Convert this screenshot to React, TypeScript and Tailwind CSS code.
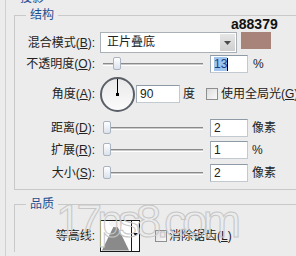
import React from 'react';

function Label({ children }: { children: React.ReactNode }) {
  return <span className="w-[80px] shrink-0 text-right text-[12px] leading-[16px] text-[#222]">{children}</span>;
}

function Slider({ thumb }: { thumb: number }) {
  return (
    <div className="relative ml-[8px] h-[14px] w-[100px] shrink-0">
      <div className="absolute inset-x-0 top-[6px] h-[3px] border-y border-t-[#8a8a8a] border-b-white bg-[#c9c9c9]" />
      <div
        style={{ left: thumb }}
        className="absolute top-0 h-[13px] w-[8px] rounded-[2px] border border-[#a9b4c2] bg-gradient-to-b from-white to-[#dbe2eb]"
      />
    </div>
  );
}

function Box({ children, className = '' }: { children: React.ReactNode; className?: string }) {
  return (
    <div
      className={`flex h-[18px] shrink-0 items-center border border-[#c3c9d1] border-t-[#8f9aa7] border-l-[#a3adb9] bg-white pl-[3px] text-[12px] leading-[14px] text-[#222] ${className}`}
    >
      {children}
    </div>
  );
}

function Check() {
  return <div className="h-[12px] w-[12px] shrink-0 border border-[#8e8f8f] bg-gradient-to-br from-[#dcdcdc] to-[#fafafa]" />;
}

function SliderRow({ label, value, unit, thumb, className = '' }: { label: React.ReactNode; value: string; unit: string; thumb: number; className?: string }) {
  return (
    <div className={`flex h-[18px] items-center ${className}`}>
      <Label>{label}</Label>
      <Slider thumb={thumb} />
      <Box className="ml-[7px] w-[38px]">{value}</Box>
      <span className="ml-[4px] text-[12px] leading-[16px] text-[#222]">{unit}</span>
    </div>
  );
}

export default function App() {
  return (
    <div className="relative h-[256px] w-[296px] overflow-hidden bg-[#ececec] font-['Liberation_Sans','Noto_Sans_CJK_SC',sans-serif]">
      <fieldset className="ml-[5px] mt-[-10px] h-[300px] border-l border-t border-[#cfcfcf]">
        <legend className="ml-[10px] px-[4px] text-[12px] leading-[17px] text-[#1f4e8f]">投影</legend>

        <fieldset className="ml-[8px] border-y border-l border-[#c9c9c9] pb-[7px]">
          <legend className="ml-[11px] px-[4px] text-[12px] leading-[17px] text-[#1f4e8f]">结构</legend>

          <div className="mt-[8px] flex h-[21px] items-center">
            <Label>
              混合模式(<u>B</u>):
            </Label>
            <div className="ml-[5px] flex h-[21px] w-[137px] items-stretch border border-[#a9b0b8] bg-white">
              <span className="flex-1 pl-[6px] text-[12px] leading-[19px] text-[#222]">正片叠底</span>
              <div className="m-[1px] flex w-[15px] items-center justify-center bg-gradient-to-b from-[#e6e6e6] to-[#cfcfcf]">
                <svg width="7" height="4" viewBox="0 0 7 4">
                  <path d="M0 0h7L3.5 4z" fill="#4a4a4a" />
                </svg>
              </div>
            </div>
            <div className="relative ml-[4px] h-[17px] w-[30px] self-start bg-[#a88379]">
              <span className="absolute bottom-full left-[-10px] mb-[1px] text-[14px] font-bold leading-[14px] text-[#111]">a88379</span>
            </div>
          </div>

          <div className="mt-[2px] flex h-[18px] items-center">
            <Label>
              不透明度(<u>O</u>):
            </Label>
            <Slider thumb={10} />
            <Box className="ml-[7px] w-[38px] border-[#7da2ce]">
              <span className="bg-[#9fc4ee] text-[#1a3f80]">13</span>
              <span className="h-[13px] w-px bg-black" />
            </Box>
            <span className="ml-[5px] text-[12px] leading-[16px] text-[#222]">%</span>
          </div>

          <div className="mt-[3px] flex h-[36px] items-center">
            <Label>
              角度(<u>A</u>):
            </Label>
            <div className="relative ml-[5px] h-[35px] w-[35px] shrink-0 rounded-full border-2 border-[#5b6068] bg-gradient-to-b from-[#e9e9e9] to-[#fbfbfb]">
              <div className="absolute left-[15px] top-0 h-[16px] w-[1px] bg-black" />
              <div className="absolute left-[14px] top-[14px] h-[3px] w-[3px] bg-black" />
            </div>
            <Box className="ml-[1px] w-[44px]">90</Box>
            <span className="ml-[3px] text-[12px] leading-[16px] text-[#222]">度</span>
            <div className="ml-[11px]">
              <Check />
            </div>
            <span className="ml-[3px] whitespace-nowrap text-[12px] leading-[16px] text-[#222]">
              使用全局光(<u>G</u>)
            </span>
          </div>

          <SliderRow className="mt-[7px]" label={<>距离(<u>D</u>):</>} value="2" unit="像素" thumb={0} />
          <SliderRow className="mt-[4px]" label={<>扩展(<u>R</u>):</>} value="1" unit="%" thumb={0} />
          <SliderRow className="mt-[5px]" label={<>大小(<u>S</u>):</>} value="2" unit="像素" thumb={0} />
        </fieldset>

        <fieldset className="ml-[8px] mt-[6px] border-l border-t border-[#c9c9c9]">
          <legend className="ml-[11px] px-[4px] text-[12px] leading-[17px] text-[#1f4e8f]">品质</legend>
          <div className="mt-[7px] flex h-[32px] items-center">
            <Label>等高线:</Label>
            <div className="ml-[5px] flex h-[32px] w-[40px] shrink-0 border border-[#1a1a1a] bg-white">
              <svg width="31" height="30" viewBox="0 0 31 30" className="border-r border-[#1a1a1a]">
                <path d="M1 30 L15 1 L29 30 Z" fill="#8a8a8a" />
                <ellipse cx="15" cy="2" rx="7" ry="4" fill="#f4f4f4" />
              </svg>
              <div className="flex flex-1 justify-center pt-[12px]">
                <svg width="5" height="3" viewBox="0 0 5 3">
                  <path d="M0 0h5L2.5 3z" fill="#111" />
                </svg>
              </div>
            </div>
            <div className="ml-[15px]">
              <Check />
            </div>
            <span className="ml-[2px] text-[12px] leading-[16px] text-[#222]">
              消除锯齿(<u>L</u>)
            </span>
          </div>
        </fieldset>
      </fieldset>

      <span className="pointer-events-none absolute left-[56px] top-[193px] font-['Liberation_Sans',sans-serif] text-[46px] leading-[56px] tracking-[-5px] text-transparent [-webkit-text-stroke:1px_#c6c6c6]">
        17ps8.com
      </span>
    </div>
  );
}
